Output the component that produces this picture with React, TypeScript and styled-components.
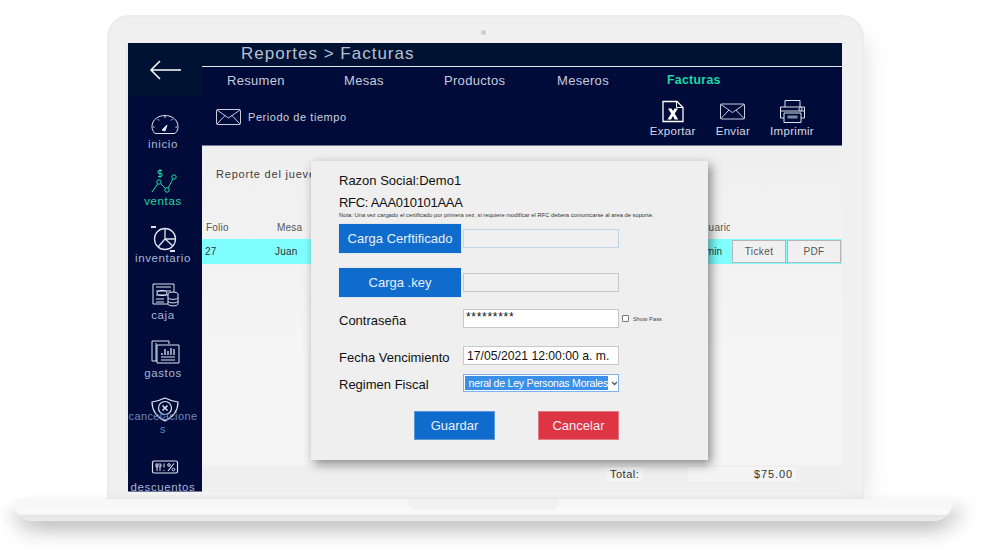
import { createGlobalStyle, styled } from "styled-components";
import { ReactNode } from "react";

const GlobalStyle = createGlobalStyle`
    html, body {
        margin: 0;
        padding: 0;
        background: #fff;
    }
    * {
        box-sizing: border-box;
    }
`;

const sans = `"Liberation Sans", Arial, sans-serif`;

const Stroke = ({ children, color = "#dfe4ee", w = 34, h = 28, box = "0 0 34 28" }: { children: ReactNode; color?: string; w?: number; h?: number; box?: string }) => (
    <svg width={w} height={h} viewBox={box} fill="none" stroke={color} strokeWidth="1">
        {children}
    </svg>
);

const GaugeIcon = () => (
    <Stroke>
        <path d="M7 22.500 C4.500 20 4 17.500 4 15.500 C4 9 10 4.500 17 4.500 C24 4.500 30 9 30 15.500 C30 18 29.500 20 27 22.500 Z" />
        <path d="M5 16h1.500M27.500 16H29M17 5v2M9.500 8l1.500 1.500M24.500 8L23 9.500" />
        <path d="M14 19l5-5-2 6z" fill="#dfe4ee" />
    </Stroke>
);

const ChartIcon = () => (
    <Stroke color="#1fd8a4">
        <path d="M4 24l7-10 8 8 7-13" />
        <circle cx="11" cy="14" r="2.200" fill="#000b3a" />
        <circle cx="19" cy="22" r="2.200" fill="#000b3a" />
        <circle cx="26" cy="9" r="2.200" fill="#000b3a" />
        <path d="M12 1v9M14 2.500h-3c-1.500 0-1.500 3 0 3h2c1.500 0 1.500 3 0 3h-3" />
    </Stroke>
);

const PieIcon = () => (
    <Stroke>
        <circle cx="17" cy="14" r="10.500" strokeWidth="1.300" />
        <path d="M17 3.500V14l-7 8M17 14l8 7M17 14h10" strokeWidth="1.300" />
        <path d="M3 2h5M22 26h5" strokeWidth="1.800" />
    </Stroke>
);

const CashIcon = () => (
    <Stroke>
        <path d="M5 2h21v20H5zM8 5h15M8 9h15M8 13h15M8 17h8M8 20h8" />
        <ellipse cx="14" cy="11" rx="5" ry="2.500" />
        <ellipse cx="25" cy="12" rx="5" ry="2" fill="#000b3a" />
        <path d="M20 12v10c0 2.500 10 2.500 10 0V12M20 15.500c0 2.500 10 2.500 10 0M20 19c0 2.500 10 2.500 10 0" fill="#000b3a" />
    </Stroke>
);

const ReportIcon = () => (
    <Stroke>
        <path d="M9 21H4V1h17v3" />
        <path d="M8 3v18" />
        <path d="M9 5h22v18H9z" />
        <path d="M14 15v-2M17 15V9M20 15v-4M23 15V8M26 15V9" strokeWidth="1.300" />
        <path d="M13 17h14M13 20h14" />
    </Stroke>
);

const ShieldIcon = () => (
    <Stroke>
        <path d="M4 5 C10 4 13 3 17 1 C21 3 24 4 30 5 C30 13 27 19 17 24 C7 19 4 13 4 5z" strokeWidth="1.200" />
        <circle cx="17" cy="11" r="6.500" strokeWidth="1.200" />
        <path d="M14.500 8.500l5 5M19.500 8.500l-5 5" strokeWidth="1.500" />
    </Stroke>
);

const DiscountIcon = () => (
    <Stroke>
        <rect x="4.500" y="7" width="25" height="12" rx="1.500" strokeWidth="1.200" />
        <path d="M8 9.500v3c0 1 2 1 2 0v-3M9 9.500V17M12 9.500V17M12 9.500c1.500 1 1.500 3 0 4M16 9.500v4M16 16v1" strokeWidth="1" />
        <path d="M26 9.500L20 17" strokeWidth="1.200" />
        <circle cx="21" cy="11" r="1.300" />
        <circle cx="25.500" cy="15.500" r="1.300" />
    </Stroke>
);

const MailIcon = ({ w = 25, h = 16 }: { w?: number; h?: number }) => (
    <svg width={w} height={h} viewBox="0 0 25 16" fill="none" stroke="#dfe4ee" strokeWidth="0.900">
        <rect x="0.500" y="0.500" width="24" height="15" rx="1" />
        <path d="M1 1l11.500 8L24 1M1 15l8-8.500M24 15l-8-8.500" />
    </svg>
);

const ExcelIcon = () => (
    <svg width="22" height="22" viewBox="0 0 22 22" fill="none">
        <path d="M1 1h14l6 6v14H1z" stroke="#fff" strokeWidth="1.300" fill="#000b3a" />
        <path d="M14.500 1v6h6" stroke="#fff" />
        <path d="M6 8h3.500l1.500 2.500L12.500 8H16l-3.300 5 3.500 6h-3.500L11 15.500 9 19H5.500l3.700-6z" fill="#fff" />
    </svg>
);

const PrinterIcon = () => (
    <svg width="25" height="23" viewBox="0 0 25 23" fill="none" stroke="#dfe4ee" strokeWidth="1">
        <path d="M5 7V.500h15V7" />
        <path d="M4 18H.500V7h24v11H21" />
        <path d="M.500 11h24" />
        <path d="M4 13h17v9.500H4z" />
        <rect x="7.500" y="15.500" width="10" height="3" fill="#7d8aa3" stroke="none" />
        <circle cx="20.500" cy="9.200" r="1.600" />
    </svg>
);

const ArrowIcon = () => (
    <svg width="33" height="20" viewBox="0 0 33 20" fill="none" stroke="#fff" strokeWidth="1.500">
        <path d="M32 10H2M11 1L2 10l9 9" />
    </svg>
);

const Page = styled.div`
    width: 988px;
    height: 556px;
    padding: 15px 35px 0 14px;
    overflow: hidden;
    background: #fff;
`;

const Lid = styled.div`
    position: relative;
    width: 757px;
    height: 484px;
    margin-left: 93px;
    padding: 26px 19px 0 19px;
    background: #f0f0f0;
    border: 2px solid #ececec;
    border-bottom: none;
    border-radius: 22px 22px 0 0;
    box-shadow: 14px 10px 24px -12px rgba(0, 0, 0, 0.12);
`;

const Camera = styled.span`
    position: absolute;
    top: 13px;
    left: 372px;
    width: 5px;
    height: 5px;
    border-radius: 50%;
    background: #cfcfcf;
`;

const Base = styled.div`
    position: relative;
    width: 939px;
    height: 22px;
    background: linear-gradient(#f7f7f7 0, #f9f9f9 70%, #e4e4e4 72%, #ebebeb 100%);
    border-radius: 2px 2px 24px 24px;
    box-shadow: 0 14px 20px rgba(0, 0, 0, 0.13), 14px 6px 16px rgba(0, 0, 0, 0.1), -8px 8px 14px rgba(0, 0, 0, 0.06);
`;

const Notch = styled.span`
    position: absolute;
    top: 0;
    left: 394px;
    width: 151px;
    height: 11px;
    background: #f1f1f1;
    border-radius: 0 0 8px 8px;
`;

const Screen = styled.div`
    position: relative;
    display: grid;
    grid-template-columns: 74px 1fr;
    width: 714px;
    height: 452px;
    background: #f4f4f4;
    &::before {
        content: "";
        position: absolute;
        top: 0;
        left: -2px;
        width: 1px;
        height: 429px;
        background: #e3e3e3;
    }
`;

const Side = styled.aside`
    display: flex;
    flex-direction: column;
    align-items: center;
    height: 449px;
    overflow: hidden;
    background: #000b3a;
    border-bottom: 1px solid #6f7c9c;
    font-family: ${sans};
`;

const BackBox = styled.div`
    display: flex;
    align-items: center;
    justify-content: center;
    flex: 0 0 53px;
    align-self: stretch;
    background: #001233;
`;

const SideItem = styled.div<{ $active?: boolean; $h?: number; $top?: number }>`
    display: flex;
    flex-direction: column;
    align-items: center;
    width: 74px;
    height: ${(p) => p.$h ?? 57}px;
    padding-top: ${(p) => p.$top ?? 0}px;
    flex: none;
    color: ${(p) => (p.$active ? "#1fd8a4" : "#a9b6d4")};
    font-size: 11.500px;
    letter-spacing: 0.600px;
    line-height: 13px;
    text-align: center;
    svg {
        flex: none;
    }
`;

const SideLabel = styled.span`
    display: block;
    width: 70px;
    margin: -1px 4px 0 0;
`;

const OverLabel = styled.span`
    position: relative;
    display: block;
    width: 69px;
    margin: -15px 4px 0 0;
    word-break: break-all;
    color: #6f88b8;
    font-size: 11px;
    letter-spacing: 0.400px;
`;

const Main = styled.main`
    position: relative;
    display: flex;
    flex-direction: column;
    min-width: 0;
    height: 449px;
`;

const TitleBar = styled.div`
    height: 23px;
    padding-left: 39px;
    background: #001233;
    color: #b6c0d2;
    font-family: ${sans};
    font-size: 17px;
    letter-spacing: 1px;
    line-height: 22px;
`;

const NavPanel = styled.div`
    display: flex;
    flex-direction: column;
    height: 80px;
    background: #000b3a;
    border-top: 1px solid #e8e8ee;
    border-bottom: 1px solid #6f7c9c;
`;

const Tabs = styled.nav`
    display: flex;
    height: 26px;
    align-items: center;
    padding-left: 25px;
    font-family: ${sans};
    font-size: 13px;
`;

const Tab = styled.span<{ $w: number; $active?: boolean }>`
    width: ${(p) => p.$w}px;
    flex: none;
    color: ${(p) => (p.$active ? "#1fd8a4" : "#c6cddb")};
    font-weight: ${(p) => (p.$active ? 700 : 400)};
    font-size: ${(p) => (p.$active ? "12.300px" : "13px")};
    letter-spacing: 0.300px;
`;

const Toolbar = styled.div`
    display: flex;
    align-items: flex-start;
    justify-content: space-between;
    padding: 7px 28px 0 14px;
    flex: 1;
`;

const Period = styled.div`
    display: flex;
    align-items: center;
    gap: 7px;
    margin-top: 9px;
    color: #cdd3df;
    font-family: ${sans};
    font-size: 11px;
    letter-spacing: 0.550px;
`;

const Actions = styled.div`
    display: flex;
    gap: 20px;
`;

const Action = styled.div`
    display: flex;
    flex-direction: column;
    align-items: center;
    gap: 1px;
    color: #d5dae5;
    font-family: ${sans};
    font-size: 11.500px;
    letter-spacing: 0.300px;
    line-height: 14px;
    svg {
        height: 23px;
    }
`;

const Content = styled.section`
    display: flex;
    flex-direction: column;
    flex: 1;
    min-height: 0;
    background: linear-gradient(#efefef, #f5f5f5 60%);
    font-family: ${sans};
    color: #333;
`;

const ReportLine = styled.div`
    height: 73px;
    padding: 21px 0 0 14px;
    font-size: 11px;
    letter-spacing: 0.800px;
    line-height: 14px;
    color: #3d3d3d;
`;

const Cols = styled.div`
    display: grid;
    grid-template-columns: 71px 419px 34px;
    height: 20px;
    padding: 0 0 4px 4px;
    align-items: center;
    font-size: 10px;
    letter-spacing: 0.200px;
    color: #555;
`;

const ColClip = styled.span`
    overflow: hidden;
    white-space: nowrap;
`;

const Row = styled.div`
    display: grid;
    grid-template-columns: 70px 1fr 39px 55px 55px;
    align-items: center;
    height: 25px;
    padding-left: 3px;
    background: #80ffff;
    font-size: 10px;
    letter-spacing: 0.200px;
    color: #333;
`;

const RowBtn = styled.span`
    display: flex;
    align-items: center;
    justify-content: center;
    height: 23px;
    margin-right: 1px;
    background: #f0f0f0;
    border: 1px solid #b5b5b5;
    color: #555;
    font-size: 10px;
    letter-spacing: 0.400px;
`;

const Spacer = styled.div`
    flex: 1;
`;

const TotalBar = styled.div`
    display: flex;
    align-items: flex-start;
    height: 27px;
    padding: 2px 0 0 405px;
    background: #efefef;
    font-size: 11px;
    letter-spacing: 0.500px;
    color: #333;
`;

const TotalLabel = styled.span`
    width: 36px;
    height: 15px;
    margin-right: 45px;
    padding-left: 3px;
    line-height: 14px;
    background: #f4f4f4;
`;

const TotalValue = styled.span`
    width: 108px;
    height: 15px;
    padding-left: 66px;
    line-height: 15px;
    letter-spacing: 0.900px;
    background: #f4f4f4;
`;

const Modal = styled.div`
    position: absolute;
    top: 118px;
    left: 109px;
    width: 397px;
    height: 299px;
    padding: 10px 0 0 28px;
    background: #efefef;
    box-shadow: 3px 4px 10px rgba(0, 0, 0, 0.45);
    font-family: ${sans};
    color: #111;
    font-size: 13px;
`;

const ModalLine = styled.div<{ $h: number; $tight?: boolean }>`
    height: ${(p) => p.$h}px;
    line-height: ${(p) => p.$h}px;
    letter-spacing: ${(p) => (p.$tight ? "-0.300px" : "0")};
`;

const Note = styled.div`
    height: 8px;
    margin-top: -4px;
    font-size: 5.800px;
    line-height: 8px;
    color: #333;
    white-space: nowrap;
`;

const FormRow = styled.div<{ $h: number; $mt?: number }>`
    display: grid;
    grid-template-columns: 124px 156px auto;
    align-items: center;
    height: ${(p) => p.$h}px;
    margin-top: ${(p) => p.$mt ?? 0}px;
`;

const FieldLabel = styled.span`
    padding-top: 3px;
`;

const BlueBtn = styled.span`
    display: flex;
    align-items: center;
    justify-content: center;
    width: 122px;
    height: 29px;
    background: #106ccc;
    box-shadow: 0 0 0 1px #e3e8ef;
    color: #e9eff7;
    font-size: 13px;
`;

const Field = styled.div<{ $white?: boolean; $focus?: boolean }>`
    display: flex;
    align-items: center;
    height: 19px;
    padding-left: 3px;
    background: ${(p) => (p.$white ? "#fff" : "#f0f0f0")};
    border: 1px solid ${(p) => (p.$focus ? "#c1d5ea" : "#c8c8c8")};
    color: #111;
    font-size: 12.200px;
    white-space: nowrap;
    overflow: hidden;
`;

const Stars = styled.span`
    margin: -3px 0 0 -1px;
    font-size: 12px;
    letter-spacing: 0.700px;
`;

const SelectBox = styled.div`
    display: flex;
    align-items: center;
    width: 156px;
    height: 18px;
    padding: 1px 0 1px 1px;
    background: #fff;
    border: 1px solid #7db4ee;
`;

const Selected = styled.div`
    width: 143px;
    height: 14px;
    overflow: hidden;
    background: #3a8fe8;
    color: #fff;
    font-size: 10.600px;
    letter-spacing: -0.250px;
    line-height: 14px;
    text-align: right;
    white-space: nowrap;
`;

const Caret = styled.svg`
    margin-left: 3px;
`;

const ShowPass = styled.label`
    display: flex;
    align-items: center;
    gap: 4px;
    margin-left: 3px;
    font-size: 5.800px;
    color: #444;
`;

const Check = styled.span`
    width: 7px;
    height: 7px;
    background: #fff;
    border: 1px solid #777;
    border-radius: 1px;
`;

const ModalActions = styled.div`
    display: flex;
    margin: 19px 0 0 75px;
    gap: 43px;
`;

const ActionBtn = styled.span<{ $danger?: boolean }>`
    display: flex;
    align-items: center;
    justify-content: center;
    width: 81px;
    height: 29px;
    background: ${(p) => (p.$danger ? "#de3545" : "#106ccc")};
    border: 1px solid ${(p) => (p.$danger ? "#e07a85" : "#5c97d6")};
    color: #e9eff7;
    font-size: 13px;
`;

const App = () => (
    <Page>
        <GlobalStyle />
        <Lid>
            <Camera />
            <Screen>
                <Side>
                    <BackBox>
                        <ArrowIcon />
                    </BackBox>
                    <SideItem $h={72} $top={15}>
                        <GaugeIcon />
                        <SideLabel>inicio</SideLabel>
                    </SideItem>
                    <SideItem $active>
                        <ChartIcon />
                        <SideLabel>ventas</SideLabel>
                    </SideItem>
                    <SideItem>
                        <PieIcon />
                        <SideLabel>inventario</SideLabel>
                    </SideItem>
                    <SideItem $h={58}>
                        <CashIcon />
                        <SideLabel>caja</SideLabel>
                    </SideItem>
                    <SideItem>
                        <ReportIcon />
                        <SideLabel>gastos</SideLabel>
                    </SideItem>
                    <SideItem>
                        <ShieldIcon />
                        <OverLabel>cancelaciones</OverLabel>
                    </SideItem>
                    <SideItem>
                        <DiscountIcon />
                        <SideLabel>descuentos</SideLabel>
                    </SideItem>
                </Side>
                <Main>
                    <TitleBar>Reportes &gt; Facturas</TitleBar>
                    <NavPanel>
                        <Tabs>
                            <Tab $w={117}>Resumen</Tab>
                            <Tab $w={100}>Mesas</Tab>
                            <Tab $w={113}>Productos</Tab>
                            <Tab $w={110}>Meseros</Tab>
                            <Tab $w={80} $active>Facturas</Tab>
                        </Tabs>
                        <Toolbar>
                            <Period>
                                <MailIcon />
                                Periodo de tiempo
                            </Period>
                            <Actions>
                                <Action>
                                    <ExcelIcon />
                                    Exportar
                                </Action>
                                <Action>
                                    <MailIcon />
                                    Enviar
                                </Action>
                                <Action>
                                    <PrinterIcon />
                                    Imprimir
                                </Action>
                            </Actions>
                        </Toolbar>
                    </NavPanel>
                    <Content>
                        <ReportLine>Reporte del jueves</ReportLine>
                        <Cols>
                            <span>Folio</span>
                            <span>Mesa</span>
                            <ColClip>Usuario</ColClip>
                        </Cols>
                        <Row>
                            <span>27</span>
                            <span>Juan</span>
                            <span>Admin</span>
                            <RowBtn>Ticket</RowBtn>
                            <RowBtn>PDF</RowBtn>
                        </Row>
                        <Spacer />
                        <TotalBar>
                            <TotalLabel>Total:</TotalLabel>
                            <TotalValue>$75.00</TotalValue>
                        </TotalBar>
                    </Content>
                    <Modal>
                        <ModalLine $h={20}>Razon Social:Demo1</ModalLine>
                        <ModalLine $h={24} $tight>RFC: AAA010101AAA</ModalLine>
                        <Note>Nota: Una vez cargado el certificado por primera vez, si requiere modificar el RFC debera comunicarse al area de soporte.</Note>
                        <FormRow $h={29} $mt={5}>
                            <BlueBtn>Carga Cerftificado</BlueBtn>
                            <Field $focus />
                        </FormRow>
                        <FormRow $h={29} $mt={15}>
                            <BlueBtn>Carga .key</BlueBtn>
                            <Field />
                        </FormRow>
                        <FormRow $h={19} $mt={12}>
                            <FieldLabel>Contraseña</FieldLabel>
                            <Field $white>
                                <Stars>*********</Stars>
                            </Field>
                            <ShowPass>
                                <Check />
                                Show Pass
                            </ShowPass>
                        </FormRow>
                        <FormRow $h={19} $mt={18}>
                            <FieldLabel>Fecha Vencimiento</FieldLabel>
                            <Field $white>17/05/2021 12:00:00 a. m.</Field>
                        </FormRow>
                        <FormRow $h={18} $mt={9}>
                            <FieldLabel>Regimen Fiscal</FieldLabel>
                            <SelectBox>
                                <Selected>neral de Ley Personas Morales</Selected>
                                <Caret width="7" height="5" viewBox="0 0 7 5" fill="none" stroke="#555" strokeWidth="1.300">
                                    <path d="M1 1l2.500 2.500L6 1" />
                                </Caret>
                            </SelectBox>
                        </FormRow>
                        <ModalActions>
                            <ActionBtn>Guardar</ActionBtn>
                            <ActionBtn $danger>Cancelar</ActionBtn>
                        </ModalActions>
                    </Modal>
                </Main>
            </Screen>
        </Lid>
        <Base>
            <Notch />
        </Base>
    </Page>
);

export default App;
